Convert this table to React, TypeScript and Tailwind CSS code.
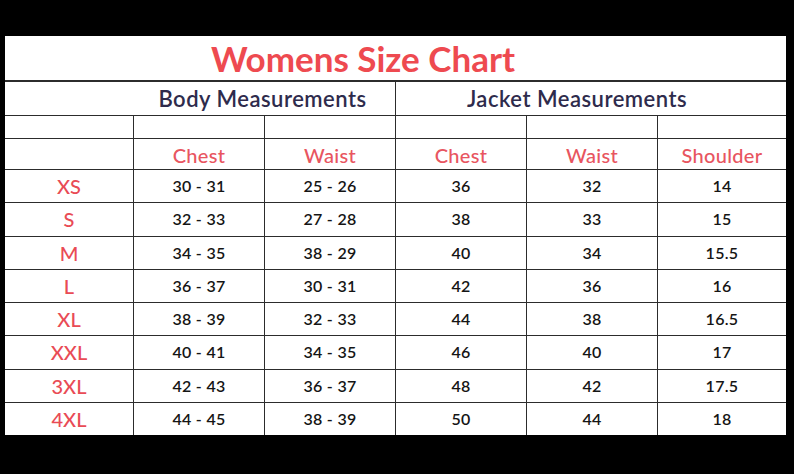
import React from 'react';

const rows = [
  { size: 'XS', chest: '30 - 31', waist: '25 - 26', jChest: '36', jWaist: '32', shoulder: '14' },
  { size: 'S', chest: '32 - 33', waist: '27 - 28', jChest: '38', jWaist: '33', shoulder: '15' },
  { size: 'M', chest: '34 - 35', waist: '38 - 29', jChest: '40', jWaist: '34', shoulder: '15.5' },
  { size: 'L', chest: '36 - 37', waist: '30 - 31', jChest: '42', jWaist: '36', shoulder: '16' },
  { size: 'XL', chest: '38 - 39', waist: '32 - 33', jChest: '44', jWaist: '38', shoulder: '16.5' },
  { size: 'XXL', chest: '40 - 41', waist: '34 - 35', jChest: '46', jWaist: '40', shoulder: '17' },
  { size: '3XL', chest: '42 - 43', waist: '36 - 37', jChest: '48', jWaist: '42', shoulder: '17.5' },
  { size: '4XL', chest: '44 - 45', waist: '38 - 39', jChest: '50', jWaist: '44', shoulder: '18' },
];

const cell = 'bg-white flex items-center justify-center';

export default function App() {
  return (
    <div className="w-[794px] h-[474px] bg-black pt-[36px] pl-[5px] font-['Lato',sans-serif]">
      <div className="w-[781px] grid grid-cols-[128px_130px_130px_130px_130px_128px] grid-rows-[45px_33px_22px_30px_repeat(8,32.25px)] gap-px bg-[#2c2c2c]">
        {/* Title */}
        <div className={`${cell} col-span-6 border-b border-[#2c2c2c] pr-[65px]`}>
          <span className="text-[35px] font-bold text-[#ee4a50] leading-none">Womens Size Chart</span>
        </div>

        {/* Group headers */}
        <div className={`${cell} col-span-3 pl-[125px]`}>
          <span className="text-[22px] font-semibold text-[#2e2b4c] leading-none tracking-[0.5px]">Body Measurements</span>
        </div>
        <div className={`${cell} col-span-3 pr-[28px]`}>
          <span className="text-[22px] font-semibold text-[#2e2b4c] leading-none tracking-[0.5px]">Jacket Measurements</span>
        </div>

        {/* Empty row */}
        {[0, 1, 2, 3, 4, 5].map((i) => (
          <div key={i} className="bg-white" />
        ))}

        {/* Column headers */}
        <div className="bg-white" />
        {['Chest', 'Waist', 'Chest', 'Waist', 'Shoulder'].map((h, i) => (
          <div key={i} className={`${cell} pt-[2px]`}>
            <span className="text-[20px] text-[#e85560] leading-none font-medium tracking-[0.3px]">{h}</span>
          </div>
        ))}

        {/* Data */}
        {rows.map((r) => (
          <React.Fragment key={r.size}>
            <div className={cell}>
              <span className="text-[20px] text-[#e94b55] leading-none font-medium">{r.size}</span>
            </div>
            {[r.chest, r.waist, r.jChest, r.jWaist, r.shoulder].map((v, i) => (
              <div key={i} className={cell}>
                <span className="text-[16px] font-semibold text-[#151515] leading-none tracking-[0.3px]">{v}</span>
              </div>
            ))}
          </React.Fragment>
        ))}
      </div>
    </div>
  );
}
